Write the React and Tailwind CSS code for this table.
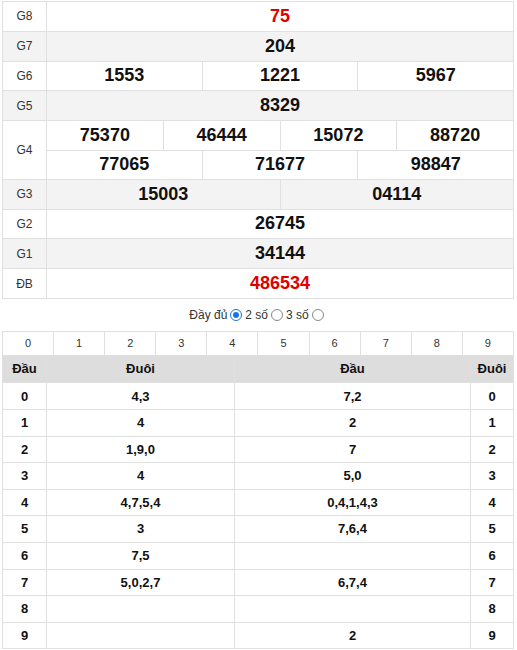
import React from "react";

const prizes = [
  { label: "G8", rows: [["75"]], red: true },
  { label: "G7", rows: [["204"]] },
  { label: "G6", rows: [["1553", "1221", "5967"]] },
  { label: "G5", rows: [["8329"]] },
  {
    label: "G4",
    rows: [
      ["75370", "46444", "15072", "88720"],
      ["77065", "71677", "98847"],
    ],
  },
  { label: "G3", rows: [["15003", "04114"]] },
  { label: "G2", rows: [["26745"]] },
  { label: "G1", rows: [["34144"]] },
  { label: "ĐB", rows: [["486534"]], red: true },
];

const loto = [
  ["0", "4,3", "7,2", "0"],
  ["1", "4", "2", "1"],
  ["2", "1,9,0", "7", "2"],
  ["3", "4", "5,0", "3"],
  ["4", "4,7,5,4", "0,4,1,4,3", "4"],
  ["5", "3", "7,6,4", "5"],
  ["6", "7,5", "", "6"],
  ["7", "5,0,2,7", "6,7,4", "7"],
  ["8", "", "", "8"],
  ["9", "", "2", "9"],
];

const Radio = ({ checked }) => (
  <span
    className={`inline-block w-[12px] h-[12px] rounded-full border align-[-2px] mx-[3px] ${
      checked ? "border-[#1a73e8] bg-white p-[2px]" : "border-[#888] bg-white"
    }`}
  >
    {checked && <span className="block w-full h-full rounded-full bg-[#1a73e8]" />}
  </span>
);

export default function App() {
  return (
    <div className="w-[517px] bg-white pl-[2px] pr-[3px] pt-[1px] text-[#222] font-['Liberation_Sans',Arial,sans-serif]">
      {/* Kết quả */}
      <div className="border border-[#e0e0e0]">
        {prizes.map((p, i) => (
          <div
            key={p.label}
            className={`flex ${i > 0 ? "border-t border-[#e0e0e0]" : ""} ${
              i % 2 === 1 ? "bg-[#f3f3f3]" : "bg-white"
            }`}
          >
            <div className="w-[44px] shrink-0 flex items-center justify-center text-[12px] text-[#333] border-r border-[#e0e0e0]">
              {p.label}
            </div>
            <div className="flex-1 flex flex-col">
              {p.rows.map((row, ri) => (
                <div
                  key={ri}
                  className={`flex h-[28.8px] ${ri > 0 ? "border-t border-[#e0e0e0]" : ""}`}
                >
                  {row.map((n, ni) => (
                    <div
                      key={ni}
                      className={`flex-1 flex items-center justify-center text-[18px] font-bold ${
                        ni > 0 ? "border-l border-[#e0e0e0]" : ""
                      } ${p.red ? "text-[#e00000]" : "text-[#111]"}`}
                    >
                      {n}
                    </div>
                  ))}
                </div>
              ))}
            </div>
          </div>
        ))}
      </div>

      {/* Tùy chọn */}
      <div className="h-[32px] flex items-center justify-center text-[12px] text-[#333]">
        Đầy đủ
        <Radio checked />2 số
        <Radio />3 số
        <Radio />
      </div>

      {/* Số chọn */}
      <div className="flex border border-[#e0e0e0] h-[25px]">
        {[0, 1, 2, 3, 4, 5, 6, 7, 8, 9].map((n) => (
          <div
            key={n}
            className={`flex-1 flex items-center justify-center text-[11px] text-[#333] ${
              n > 0 ? "border-l border-[#e0e0e0]" : ""
            }`}
          >
            {n}
          </div>
        ))}
      </div>

      {/* Đầu đuôi */}
      <table className="w-full border-collapse text-[13px] font-bold text-[#111]">
        <thead>
          <tr className="bg-[#dddddd] h-[27px]">
            <th className="w-[44px] border border-[#e0e0e0] border-t-0">Đầu</th>
            <th className="w-[188px] border border-[#e0e0e0] border-t-0">Đuôi</th>
            <th className="border border-[#e0e0e0] border-t-0">Đầu</th>
            <th className="w-[43px] border border-[#e0e0e0] border-t-0">Đuôi</th>
          </tr>
        </thead>
        <tbody>
          {loto.map((r) => (
            <tr key={r[0]} className="h-[26.6px]">
              {r.map((c, ci) => (
                <td key={ci} className="border border-[#e0e0e0] text-center">
                  {c}
                </td>
              ))}
            </tr>
          ))}
        </tbody>
      </table>
    </div>
  );
}
